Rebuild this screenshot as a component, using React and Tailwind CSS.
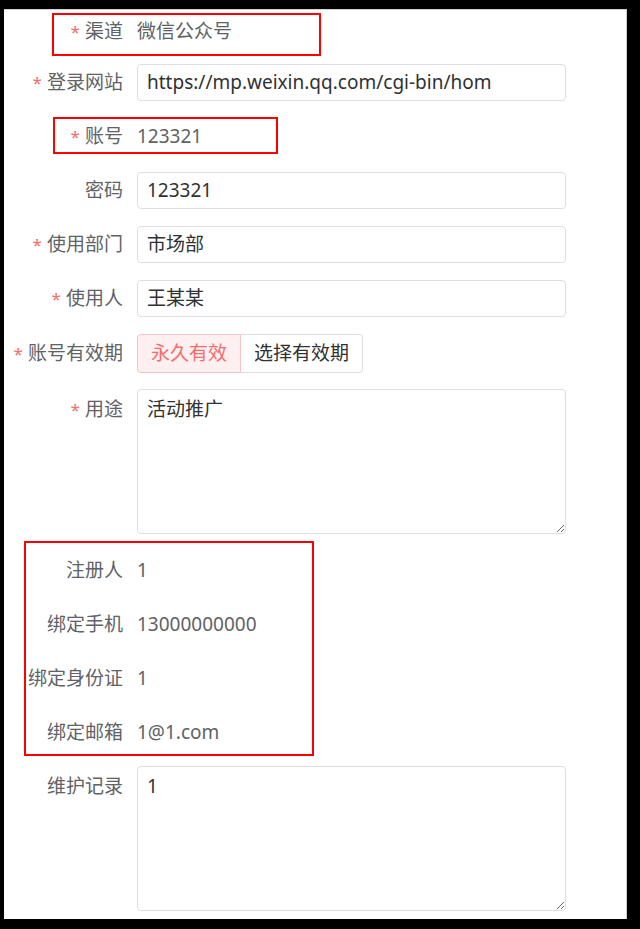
import React from 'react';

const font = { fontFamily: '"Noto Sans", "Noto Sans CJK SC", sans-serif' };

function Label({ text, required, top }) {
    return (
        <div className={`w-[119px] shrink-0 text-right text-[19px] leading-[37px] text-[#606266] whitespace-nowrap ${top ? 'self-start' : ''}`}>
            {required && <span className="text-[#f56c6c] mr-[5px] text-[17px]">*</span>}
            {text}
        </div>
    );
}

function Field({ label, required, value, className = '' }) {
    return (
        <div className={`flex items-center h-[37px] ${className}`}>
            <Label text={label} required={required} />
            <div className="ml-[14px] w-[429px] h-[37px] border border-[#dcdfe6] rounded-[4px] px-[9px] text-[19px] leading-[35px] text-[#303133] whitespace-nowrap overflow-hidden">
                {value}
            </div>
        </div>
    );
}

function Info({ label, required, value, className = '' }) {
    return (
        <div className={`flex items-center h-[37px] ${className}`}>
            <Label text={label} required={required} />
            <div className="ml-[14px] text-[19px] text-[#606266] whitespace-nowrap">{value}</div>
        </div>
    );
}

function Area({ label, required, value, className = '' }) {
    return (
        <div className={`flex items-start ${className}`}>
            <div className="pt-[2px]">
                <Label text={label} required={required} top />
            </div>
            <textarea
                readOnly
                value={value}
                className="ml-[14px] w-[429px] h-[145px] border border-[#dcdfe6] rounded-[4px] px-[9px] py-[6px] text-[19px] leading-[26px] text-[#303133] outline-none"
                style={font}
            />
        </div>
    );
}

export default function App() {
    return (
        <div className="w-[640px] h-[929px] bg-black pt-[9px] pl-[4px]" style={font}>
            <div className="relative w-[623px] h-[910px] bg-white border-t border-r border-[#cfcfcf] pt-[2px]">
                {/* annotation boxes */}
                <div className="absolute left-[48px] top-[3px] w-[269px] h-[43px] border-2 border-[#ff0000]" />
                <div className="absolute left-[49px] top-[107px] w-[225px] h-[37px] border-2 border-[#ff0000]" />
                <div className="absolute left-[20px] top-[531px] w-[290px] h-[215px] border-2 border-[#ff0000]" />

                <Info label="渠道" required value="微信公众号" className="mt-[1px]" />
                <Field label="登录网站" required value="https://mp.weixin.qq.com/cgi-bin/hom" className="mt-[14px]" />
                <Info label="账号" required value="123321" className="mt-[17px]" />
                <Field label="密码" value="123321" className="mt-[17px]" />
                <Field label="使用部门" required value="市场部" className="mt-[17px]" />
                <Field label="使用人" required value="王某某" className="mt-[17px]" />

                <div className="flex items-center h-[39px] mt-[17px]">
                    <Label text="账号有效期" required />
                    <div className="ml-[14px] flex h-[39px]">
                        <div className="w-[104px] flex items-center justify-center bg-[#fef0f0] border border-[#fbc4c4] rounded-l-[4px] text-[19px] text-[#f56c6c]">永久有效</div>
                        <div className="w-[122px] flex items-center justify-center bg-white border border-l-0 border-[#dcdfe6] rounded-r-[4px] text-[19px] text-[#303133]">选择有效期</div>
                    </div>
                </div>

                <Area label="用途" required value="活动推广" className="mt-[16px]" />

                <Info label="注册人" value="1" className="mt-[18px]" />
                <Info label="绑定手机" value="13000000000" className="mt-[17px]" />
                <Info label="绑定身份证" value="1" className="mt-[17px]" />
                <Info label="绑定邮箱" value="1@1.com" className="mt-[17px]" />

                <Area label="维护记录" value="1" className="mt-[15px]" />
            </div>
        </div>
    );
}
